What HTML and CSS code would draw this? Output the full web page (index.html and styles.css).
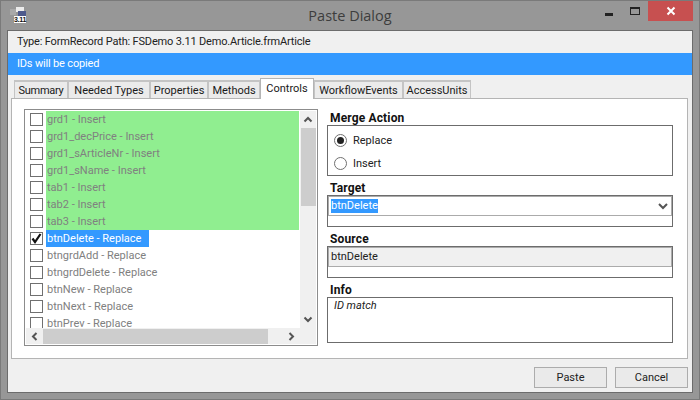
FILE: index.html
```html
<!DOCTYPE html>
<html lang="en">
<head>
<meta charset="utf-8">
<title>Paste Dialog</title>
<link rel="stylesheet" href="styles.css">
</head>
<body>
<div class="window">
  <div class="titlebar">
    <div class="app-icon"><span class="icon-ghost"></span><span class="icon-page"></span><span class="icon-blue"></span><span class="icon-label">3.11</span></div>
    <div class="title">Paste Dialog</div>
    <div class="controls">
      <span class="ctl ctl-min"><i></i></span>
      <span class="ctl ctl-max"><i></i></span>
      <span class="ctl ctl-close"><svg width="10" height="10" viewBox="0 0 10 10"><path d="M1.5 1.5L8.5 8.5M8.5 1.5L1.5 8.5" stroke="#fff" stroke-width="2" fill="none"/></svg></span>
    </div>
  </div>
  <div class="client">
    <div class="info-row">Type: FormRecord Path: FSDemo 3.11 Demo.Article.frmArticle</div>
    <div class="banner">IDs will be copied</div>
    <div class="tabs">
      <div class="tab t1">Summary</div>
      <div class="tab t2">Needed Types</div>
      <div class="tab t3">Properties</div>
      <div class="tab t4">Methods</div>
      <div class="tab active">Controls</div>
      <div class="tab t6">WorkflowEvents</div>
      <div class="tab t7">AccessUnits</div>
    </div>
    <div class="panel">
      <div class="listbox">
        <div class="list-top">
          <div class="rows">
            <div class="row"><span class="check"></span><span class="label green">grd1 - Insert</span></div>
            <div class="row"><span class="check"></span><span class="label green">grd1_decPrice - Insert</span></div>
            <div class="row"><span class="check"></span><span class="label green">grd1_sArticleNr - Insert</span></div>
            <div class="row"><span class="check"></span><span class="label green">grd1_sName - Insert</span></div>
            <div class="row"><span class="check"></span><span class="label green">tab1 - Insert</span></div>
            <div class="row"><span class="check"></span><span class="label green">tab2 - Insert</span></div>
            <div class="row"><span class="check"></span><span class="label green">tab3 - Insert</span></div>
            <div class="row"><span class="check"><svg width="11" height="11" viewBox="0 0 11 11"><path d="M1.5 5.5L4 9L9.5 1" stroke="#111" stroke-width="2.2" fill="none"/></svg></span><span class="label selected">btnDelete - Replace</span></div>
            <div class="row"><span class="check"></span><span class="label">btngrdAdd - Replace</span></div>
            <div class="row"><span class="check"></span><span class="label">btngrdDelete - Replace</span></div>
            <div class="row"><span class="check"></span><span class="label">btnNew - Replace</span></div>
            <div class="row"><span class="check"></span><span class="label">btnNext - Replace</span></div>
            <div class="row"><span class="check"></span><span class="label">btnPrev - Replace</span></div>
          </div>
          <div class="vscroll">
            <svg class="arrow" width="16" height="17" viewBox="0 0 16 17"><path d="M4.5 10.5L8 7L11.5 10.5" stroke="#555" stroke-width="2" fill="none"/></svg>
            <div class="vthumb"></div>
            <svg class="arrow arrow-down" width="16" height="17" viewBox="0 0 16 17"><path d="M4.5 6.5L8 10L11.5 6.5" stroke="#555" stroke-width="2" fill="none"/></svg>
          </div>
        </div>
        <div class="hscroll">
          <svg class="arrow" width="17" height="15" viewBox="0 0 17 15"><path d="M10.5 4L7 7.5L10.5 11" stroke="#555" stroke-width="2" fill="none"/></svg>
          <div class="hthumb"></div>
          <svg class="arrow arrow-end" width="17" height="15" viewBox="0 0 17 15"><path d="M6.5 4L10 7.5L6.5 11" stroke="#555" stroke-width="2" fill="none"/></svg>
        </div>
      </div>
      <div class="side">
        <div class="group-label">Merge Action</div>
        <div class="box merge">
          <div class="radio-row"><span class="radio on"></span>Replace</div>
          <div class="radio-row"><span class="radio"></span>Insert</div>
        </div>
        <div class="group-label">Target</div>
        <div class="box field-box">
          <div class="combo"><span class="sel">btnDelete</span><svg width="12" height="8" viewBox="0 0 12 8"><path d="M2 2L6 6L10 2" stroke="#555" stroke-width="2" fill="none"/></svg></div>
        </div>
        <div class="group-label">Source</div>
        <div class="box field-box">
          <div class="readonly">btnDelete</div>
        </div>
        <div class="group-label">Info</div>
        <div class="box info-box">ID match</div>
      </div>
    </div>
    <div class="footer">
      <div class="btn">Paste</div>
      <div class="btn">Cancel</div>
    </div>
  </div>
</div>
</body>
</html>
```
FILE: styles.css
```css
* { box-sizing: border-box; }
html, body { margin: 0; padding: 0; }
body { width: 700px; height: 400px; overflow: hidden; font-family: Roboto, "Open Sans", sans-serif; font-size: 11px; color: #1a1a1a; }
.window { width: 700px; height: 400px; background: #979797; border: 1px solid #7a7a7a; display: flex; flex-direction: column; padding: 0 6px 6px; }
.titlebar { height: 29px; flex: none; position: relative; }
.app-icon { position: absolute; left: 3px; top: 6px; width: 24px; height: 18px; }
.icon-ghost { position: absolute; left: 0; top: 2px; width: 6px; height: 6px; background: #a9a9a9; }
.icon-page { position: absolute; left: 6px; top: 0; width: 8px; height: 5px; background: #ececec; }
.icon-blue { position: absolute; left: 8px; top: 4px; width: 8px; height: 5px; background: #4e5a8c; }
.icon-label { position: absolute; left: 4px; top: 9px; width: 12px; height: 7px; background: #fff; color: #111; font-size: 7px; line-height: 7px; font-weight: 700; text-align: center; letter-spacing: -0.3px; font-family: "Liberation Sans", sans-serif; }
.title { text-align: center; font-size: 14.5px; line-height: 30px; color: #3d3d3d; font-family: "Open Sans", sans-serif; }
.controls { position: absolute; right: 0; top: 0; display: flex; align-items: flex-start; }
.ctl { display: flex; justify-content: center; align-items: center; height: 20px; }
.ctl-min { width: 27px; }
.ctl-min i { display: block; width: 8px; height: 3px; background: #222; margin-top: 6px; }
.ctl-max { width: 26px; }
.ctl-max i { display: block; width: 10px; height: 8px; border: 1px solid #222; border-top-width: 2px; }
.ctl-close { width: 45px; background: #c75050; }
.client { flex: 1; background: #f0f0f0; border: 1px solid #6c6c6c; display: flex; flex-direction: column; min-height: 0; }
.info-row { height: 22px; padding-left: 9px; line-height: 21px; color: #222; letter-spacing: -0.17px; }
.banner { height: 22px; padding-left: 9px; line-height: 21px; background: #3399ff; color: #fff; letter-spacing: -0.17px; }
.tabs { height: 23px; flex: none; display: flex; align-items: flex-end; padding-left: 6px; position: relative; z-index: 1; }
.tab { height: 18px; background: #ebebeb; border: 1px solid #c4c4c4; border-top-width: 2px; border-bottom: 0; text-align: center; line-height: 17px; white-space: nowrap; }
.t1 { width: 54px; letter-spacing: -0.3px; }
.t2 { width: 82px; }
.t3 { width: 58px; }
.t4 { width: 52px; }
.active { width: 54px; height: 21px; background: #fff; border: 1px solid #b4b4b4; border-bottom: 0; line-height: 20px; margin-bottom: -1px; }
.t6 { width: 89px; }
.t7 { width: 68px; }
.panel { height: 261px; flex: none; margin: 0 4px 0 3px; background: #fff; border: 1px solid #b4b4b4; display: flex; padding: 10px 14px 13px 12px; gap: 9px; }
.listbox { width: 294px; height: 237px; border: 1px solid #8c8c8c; padding: 1px; display: flex; flex-direction: column; flex: none; }
.list-top { height: 217px; display: flex; flex: none; }
.rows { width: 274px; height: 217px; overflow: hidden; flex: none; }
.row { height: 17px; display: flex; align-items: center; color: #808080; }
.check { width: 13px; height: 13px; border: 1px solid #707070; margin: 0 3px 0 4px; flex: none; background: #fff; display: flex; align-items: center; justify-content: center; }
.label { height: 17px; line-height: 18px; padding: 0 1px; }
.green { width: 253px; background: #90ee90; }
.selected { width: 103px; background: #3399ff; color: #fff; }
.vscroll { flex: 1; background: #f0f0f0; display: flex; flex-direction: column; align-items: center; }
.vthumb { height: 78px; width: 15px; background: #cdcdcd; flex: none; }
.arrow { flex: none; display: block; }
.arrow-down { margin-top: auto; }
.hscroll { height: 16px; flex: none; background: #f0f0f0; display: flex; align-items: center; }
.hthumb { width: 225px; height: 15px; background: #cdcdcd; }
.arrow-end { margin-left: auto; margin-right: 16px; }
.side { flex: 1; min-width: 0; display: flex; flex-direction: column; }
.group-label { height: 16px; margin-left: 3px; font-weight: 700; color: #111; line-height: 19px; font-size: 12px; letter-spacing: 0.15px; }
.box { border: 1px solid #6c6c6c; background: #fff; margin-bottom: 3px; flex: none; }
.merge { height: 51px; padding-top: 3px; }
.radio-row { height: 23px; display: flex; align-items: center; gap: 6px; padding-left: 6px; color: #222; }
.radio { width: 13px; height: 13px; border-radius: 50%; border: 1px solid #707070; background: #fff; display: flex; align-items: center; justify-content: center; flex: none; }
.radio.on::after { content: ""; width: 7px; height: 7px; border-radius: 50%; background: #222; }
.field-box { height: 32px; }
.combo { height: 20px; border: 1px solid #ababab; display: flex; align-items: center; justify-content: space-between; padding: 0 2px 0 2px; }
.sel { background: #3399ff; color: #fff; line-height: 14px; height: 14px; }
.readonly { height: 20px; border: 1px solid #ababab; background: #f0f0f0; padding-left: 2px; line-height: 18px; color: #222; }
.info-box { height: 46px; font-style: italic; padding: 0 0 0 6px; line-height: 16px; color: #222; margin-bottom: 0; }
.footer { flex: 1; display: flex; justify-content: flex-end; gap: 8px; padding: 8px 4px 0 0; }
.btn { width: 73px; height: 21px; background: #eaeaea; border: 1px solid #acacac; text-align: center; line-height: 20px; color: #222; }
```
